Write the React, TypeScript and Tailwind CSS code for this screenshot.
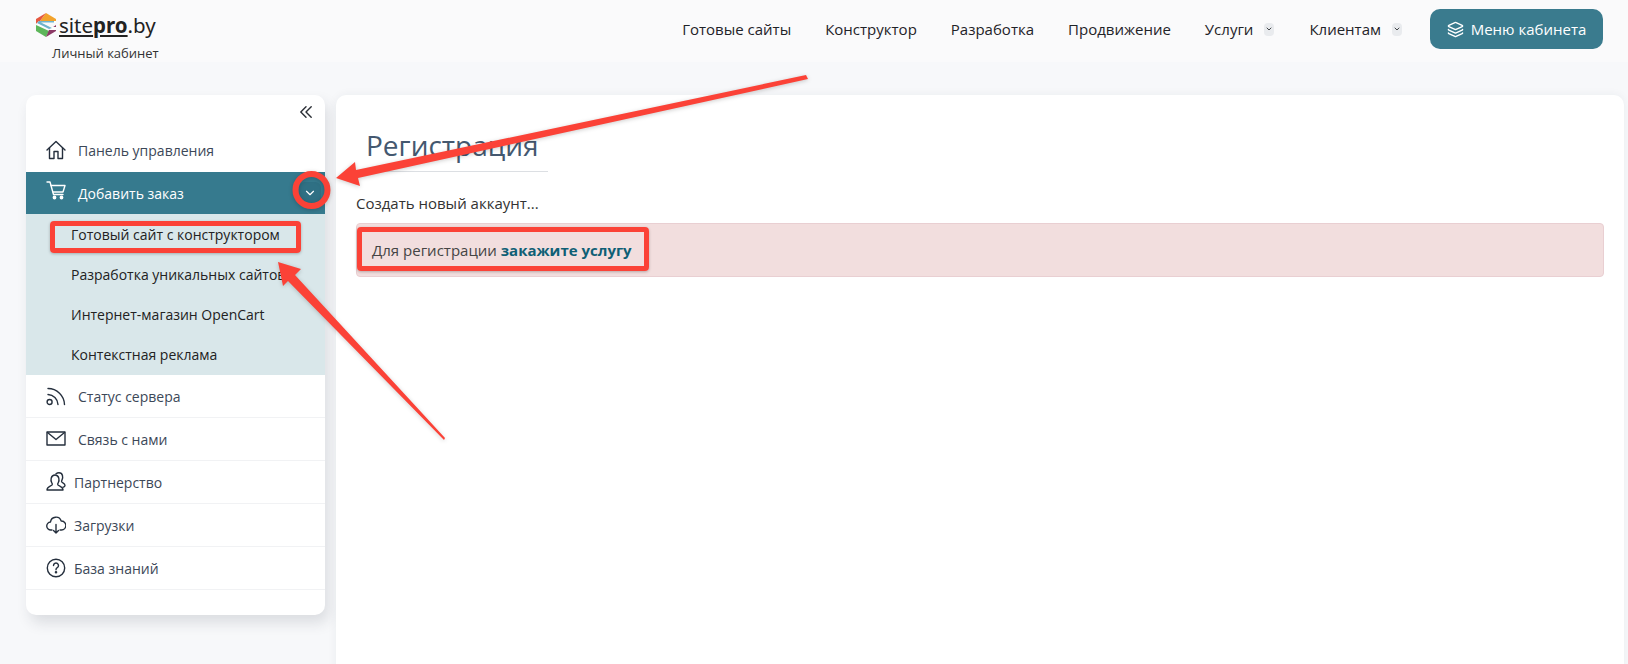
import { ChevronDown, Layers } from "lucide-react";

const topLinks = ["Готовые сайты", "Конструктор", "Разработка", "Продвижение"];
const subLinks = ["Готовый сайт с конструктором", "Разработка уникальных сайтов", "Интернет-магазин OpenCart", "Контекстная реклама"];

function Logo() {
  return (
    <svg width="20" height="24" viewBox="0 0 20 24" className="shrink-0">
      <polygon points="10,0 20,6 20,8 4,8" fill="#f2a32c" />
      <polygon points="10,0 0,6 0,11 4,8" fill="#e5573f" />
      <polygon points="0,18 0,12 13,18 10,24" fill="#5db65a" />
      <polygon points="10,24 20,18 20,12 13,17" fill="#8c3a66" />
      <polygon points="3,8 20,8 20,10 7,10 15,14 20,14 20,17 14,17 0,11" fill="#ffffff" />
      <polygon points="3,8 18,8 18,9.5 5,9.5 16,15 13,16 1,10" fill="#6fb3cc" />
    </svg>
  );
}

function Icon({ children, w = 20, h = 20 }: { children: React.ReactNode; w?: number; h?: number }) {
  return (
    <svg width={w} height={h} viewBox={`0 0 ${w} ${h}`} fill="none" stroke="currentColor" strokeWidth="1.4" strokeLinecap="round" strokeLinejoin="round">
      {children}
    </svg>
  );
}

const homeIcon = (
  <Icon>
    <path d="M1 10 10 1.5 19 10" />
    <path d="M3.5 8v10.5h4.5v-7h4v7h4.5V8" />
  </Icon>
);
const cartIcon = (
  <Icon>
    <path d="M1 1h3l3.5 12.5h9.5" />
    <path d="M5 4.5h14l-2 6.5H7" />
    <circle cx="8.5" cy="16.5" r="1.2" fill="currentColor" />
    <circle cx="15.5" cy="16.5" r="1.2" fill="currentColor" />
  </Icon>
);
const rssIcon = (
  <Icon>
    <circle cx="3.6" cy="16" r="2.5" />
    <path d="M2 8.5a10.5 10.5 0 0 1 10 10" />
    <path d="M2 2.5A16.5 16.5 0 0 1 18.5 18.5" />
  </Icon>
);
const mailIcon = (
  <Icon>
    <rect x="1" y="3" width="18" height="13" />
    <path d="M1.5 3.5 10 10.5 18.5 3.5" />
  </Icon>
);
const partnerIcon = (
  <Icon>
    <path d="M1 18c0-3.5 3-3.5 5-5 .6-.6.4-1.4-.3-2.4C4.500 9 4.500 3 9 3s4.500 6 3.300 7.600c-.7 1-.9 1.800-.3 2.400 2 1.500 5 1.500 5 5z" />
    <path d="M10 1.800C11 1 12 .8 13 .8c4 0 4.200 5 3 7-.6 1-.6 1.800 0 2.400 1 .8 3 1 3 3.300 0 1-.8 1.500-2 1.700" />
  </Icon>
);
const cloudIcon = (
  <Icon>
    <path d="M6 15H5a4 4 0 0 1-.5-8 5.500 5.500 0 0 1 10.700-1 4.500 4.500 0 0 1 .3 9H14" />
    <path d="M10 9.500V18M7.500 15.500 10 18l2.500-2.500" />
  </Icon>
);
const helpIcon = (
  <Icon>
    <circle cx="10" cy="10" r="8.700" />
    <path d="M7.500 7.500a2.500 2.500 0 1 1 3.800 2.200c-.9.500-1.300 1-1.300 2" />
    <circle cx="10" cy="14.300" r=".6" fill="currentColor" />
  </Icon>
);

function SideRow({ icon, label, textClass }: { icon: React.ReactNode; label: string; textClass: string }) {
  return (
    <div className="flex h-[43px] items-center border-b border-[#f1f2f4] pl-[20px] text-[#3c4858]">
      <span className="w-[19px] shrink-0 text-[#252f3d]">{icon}</span>
      <span className={textClass}>{label}</span>
    </div>
  );
}

function Caret() {
  return (
    <span className="ml-[11px] flex h-[13px] w-[10px] items-center justify-center rounded bg-[#e9ebee]">
      <ChevronDown size={8} strokeWidth={2.5} />
    </span>
  );
}

function Overlay() {
  return (
    <>
      <svg width="1628" height="664" className="pointer-events-none absolute left-0 top-0 drop-shadow-[0_1px_2px_rgba(0,0,0,0.2)]">
        <polygon points="806,75 808,79 358,178 360,186 336,178 355,162 356,170" fill="#fb4237" />
        <polygon points="445,438 444,440 288,281 283,286 278,262 301,269 295,275" fill="#fb4237" />
        <circle cx="311.500" cy="190" r="16" fill="none" stroke="#fb4237" strokeWidth="6" />
      </svg>
      <div className="pointer-events-none absolute left-[50px] top-[221px] h-[32px] w-[251px] rounded-[4px] border-[5px] border-[#fb4237] shadow-[0_1px_3px_rgba(0,0,0,0.25)]" />
      <div className="pointer-events-none absolute left-[357px] top-[227px] h-[44px] w-[292px] rounded-[4px] border-[5px] border-[#fb4237] shadow-[0_1px_3px_rgba(0,0,0,0.25)]" />
    </>
  );
}

export default function App() {
  return (
    <div className="relative h-[664px] w-[1628px] overflow-hidden bg-[#f7f8fa] font-['Open_Sans',sans-serif]">
      <header className="flex h-[62px] items-start justify-between bg-[#fafafb] pl-[36px] pr-[25px]">
        <div className="pt-[12px]">
          <div className="flex items-center gap-[3px]">
            <Logo />
            <span className="font-['Noto_Sans',sans-serif] text-[20.5px] leading-[26px] text-[#222]">
              <span className="underline underline-offset-2">site<b className="font-bold">pro</b></span>.by
            </span>
          </div>
          <div className="ml-[16px] mt-[6px] text-[13px] leading-[18px] text-[#333]">Личный кабинет</div>
        </div>
        <nav className="flex items-center pt-[9px] text-[15px] text-[#1f2328]">
          <div className="flex gap-[34px]">
            {topLinks.map((link) => (
              <span key={link}>{link}</span>
            ))}
          </div>
          <span className="ml-[34px] flex items-center">
            Услуги
            <Caret />
          </span>
          <span className="ml-[35px] flex items-center">
            Клиентам
            <Caret />
          </span>
          <button className="ml-[28px] flex h-[40px] w-[173px] items-center justify-center gap-[7px] rounded-[10px] bg-[#3a7b8e] text-white">
            <Layers size={17} strokeWidth={2} />
            Меню кабинета
          </button>
        </nav>
      </header>

      <div className="flex gap-[11px] pl-[26px] pr-[4px] pt-[33px]">
        <aside className="h-[520px] w-[299px] shrink-0 rounded-[10px] bg-white text-[14px] shadow-[4px_8px_14px_rgba(40,50,60,0.13)]">
          <div className="flex h-[35px] items-start justify-end pr-[13px] pt-[11px] text-[#2b2f36]">
            <Icon w={12} h={12}>
              <path d="M6 .8.8 6 6 11.200M11.200.8 6 6l5.200 5.200" />
            </Icon>
          </div>
          <div className="flex h-[42px] items-center pb-[2px] pl-[20px] text-[#3c4858]">
            <span className="w-[32px] shrink-0 text-[#252f3d]">{homeIcon}</span>
            <span>Панель управления</span>
          </div>
          <div className="flex h-[42px] items-center justify-between bg-[#367a8e] pl-[20px] pr-[4px] text-white">
            <div className="flex items-center">
              <span className="w-[32px] shrink-0 -translate-y-[2px]">{cartIcon}</span>
              <span>Добавить заказ</span>
            </div>
            <span className="flex h-[22px] w-[22px] items-center justify-center rounded-[6px] bg-[#2f7084]">
              <ChevronDown size={14} strokeWidth={2} />
            </span>
          </div>
          <div className="h-[161px] bg-[#d9e7ea] pl-[45px] text-[#222]">
            {subLinks.map((link) => (
              <div key={link} className="flex h-[40px] items-center overflow-hidden whitespace-nowrap">
                {link}
              </div>
            ))}
          </div>
          <SideRow icon={rssIcon} label="Статус сервера" textClass="ml-[13px]" />
          <SideRow icon={mailIcon} label="Связь с нами" textClass="ml-[13px]" />
          <SideRow icon={partnerIcon} label="Партнерство" textClass="ml-[9px]" />
          <SideRow icon={cloudIcon} label="Загрузки" textClass="ml-[9px]" />
          <SideRow icon={helpIcon} label="База знаний" textClass="ml-[9px]" />
        </aside>

        <main className="h-[600px] flex-1 rounded-[10px] bg-white pl-[20px] pr-[20px] pt-[30px] shadow-[0_0_10px_rgba(40,50,60,0.06)]">
          <h1 className="inline-block w-[192px] border-b border-[#dcdfe3] pb-[5px] pl-[10px] text-[28px] leading-[41px] text-[#44586f]">
            Регистрация
          </h1>
          <p className="mt-[20px] text-[15px] leading-[22px] text-[#333]">Создать новый аккаунт...</p>
          <div className="mt-[9px] flex h-[54px] items-center rounded-[4px] border border-[#e9cfd2] bg-[#f2dede] pl-[15px] text-[15px] text-[#444]">
            Для регистрации&nbsp;<b className="font-bold text-[#0f5f75]">закажите услугу</b>
          </div>
        </main>
      </div>

      <Overlay />
    </div>
  );
}
